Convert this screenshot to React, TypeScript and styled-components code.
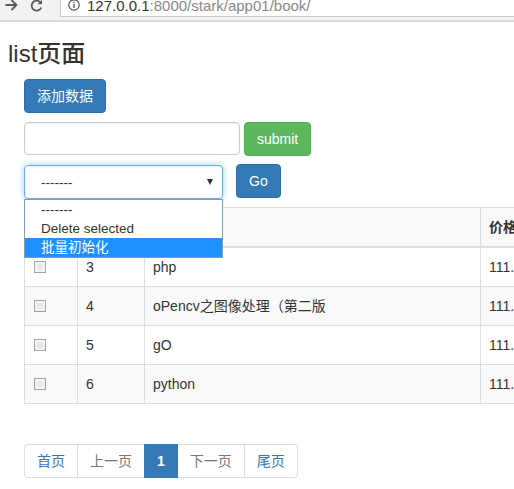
import React from "react";
import styled, { createGlobalStyle } from "styled-components";

const Global = createGlobalStyle`
  html, body { margin: 0; padding: 0; background: #fff; overflow: hidden; }
  body {
    font-family: "Liberation Sans", "Noto Sans CJK SC", Arial, sans-serif;
    font-size: 14px;
    color: #333;
  }
  * { box-sizing: border-box; }
`;

const font = `"Liberation Sans", "Noto Sans CJK SC", Arial, sans-serif`;

const TopBar = styled.div`
  height: 22px;
  display: flex;
  align-items: flex-end;
  overflow: hidden;
  background: #f2f2f2;
  border-bottom: 2px solid #d9d9d9;
  padding-bottom: 3px;
`;

const NavIcon = styled.span<{ $w: number }>`
  width: ${(p) => p.$w}px;
  height: 24px;
  display: flex;
  align-items: center;
  justify-content: center;
  flex: none;
`;

const AddressBox = styled.div`
  flex: 1;
  height: 24px;
  margin-left: 10px;
  background: #fff;
  border: 1px solid #c8c8c8;
  border-right: none;
  border-radius: 2px 0 0 2px;
  display: flex;
  align-items: center;
  padding-left: 7px;
  gap: 7px;
  font-family: ${font};
  font-size: 15px;
  white-space: nowrap;
`;

const Host = styled.span`
  color: #333;
`;
const PathPart = styled.span`
  color: #888;
`;

const Title = styled.h3`
  margin: 19px 0 0 8px;
  font-size: 24px;
  line-height: 26px;
  font-weight: 500;
  color: #333;
`;

const Content = styled.div`
  padding-left: 24px;
  display: flex;
  flex-direction: column;
  align-items: flex-start;
`;

const Btn = styled.button<{ $variant: "primary" | "success"; $h?: number }>`
  font-family: ${font};
  font-size: 14px;
  line-height: 20px;
  height: ${(p) => p.$h ?? 34}px;
  padding: 0 12px;
  border-radius: 4px;
  color: #fff;
  border: 1px solid ${(p) => (p.$variant === "primary" ? "#2e6da4" : "#4cae4c")};
  background: ${(p) => (p.$variant === "primary" ? "#337ab7" : "#5cb85c")};
  cursor: pointer;
  flex: none;
`;

const Row = styled.div<{ $mt: number; $gap: number }>`
  display: flex;
  align-items: flex-start;
  gap: ${(p) => p.$gap}px;
  margin-top: ${(p) => p.$mt}px;
`;

const TextInput = styled.input`
  width: 216px;
  height: 33px;
  border: 1px solid #ccc;
  border-radius: 4px;
  box-shadow: inset 0 1px 1px rgba(0, 0, 0, 0.075);
  padding: 6px 12px;
  font-family: ${font};
  font-size: 14px;
  outline: none;
`;

const SelectWrap = styled.div`
  position: relative;
  width: 199px;
  margin-top: 1px;
`;

const SelectBox = styled.div`
  height: 34px;
  border: 1px solid #66afe9;
  border-radius: 4px;
  box-shadow: inset 0 1px 1px rgba(0, 0, 0, 0.075), 0 0 6px rgba(102, 175, 233, 0.6);
  display: flex;
  align-items: center;
  justify-content: space-between;
  padding: 0 9px 0 16px;
  font-size: 13.5px;
  color: #333;
  background: #fff;
`;

const Caret = styled.span`
  width: 0;
  height: 0;
  border-left: 3.5px solid transparent;
  border-right: 3.5px solid transparent;
  border-top: 6px solid #333;
`;

const Dropdown = styled.div`
  position: absolute;
  top: 34px;
  left: 0;
  width: 199px;
  background: #fff;
  border: 1px solid #7f9db9;
  z-index: 5;
`;

const Option = styled.div<{ $active?: boolean }>`
  height: 19px;
  line-height: 19px;
  padding-left: 16px;
  font-size: 13.5px;
  font-family: ${font};
  color: ${(p) => (p.$active ? "#fff" : "#333")};
  background: ${(p) => (p.$active ? "#1e90ff" : "#fff")};
`;

const Table = styled.table`
  margin-top: 8px;
  width: 620px;
  border-collapse: collapse;
  table-layout: fixed;
  flex: none;
`;

const Th = styled.th`
  border: 1px solid #ddd;
  border-bottom: 2px solid #ddd;
  padding: 9px 8px 8px;
  height: 39px;
  line-height: 20px;
  text-align: left;
  font-weight: 700;
  background: #f9f9f9;
  white-space: nowrap;
`;

const Tr = styled.tr<{ $striped: boolean }>`
  background: ${(p) => (p.$striped ? "#f9f9f9" : "#fff")};
`;

const Td = styled.td`
  border: 1px solid #ddd;
  padding: 9px 8px;
  line-height: 20px;
  white-space: nowrap;
  overflow: hidden;
`;

const Check = styled.span`
  display: block;
  width: 12px;
  height: 12px;
  margin-left: 1px;
  border: 1px solid #a6a6a6;
  background: #e9e9e9;
  box-shadow: inset 0 0 0 2px #f3f3f3;
`;

const Pager = styled.ul`
  display: flex;
  list-style: none;
  margin: 40px 0 0;
  padding: 0;
`;

const PageItem = styled.li<{ $kind: "link" | "disabled" | "active"; $first?: boolean; $last?: boolean }>`
  padding: 6px 12px;
  line-height: 20px;
  font-size: 14px;
  border: 1px solid ${(p) => (p.$kind === "active" ? "#337ab7" : "#ddd")};
  margin-left: ${(p) => (p.$first ? 0 : -1)}px;
  position: relative;
  z-index: ${(p) => (p.$kind === "active" ? 2 : 1)};
  color: ${(p) => (p.$kind === "active" ? "#fff" : p.$kind === "disabled" ? "#777" : "#337ab7")};
  background: ${(p) => (p.$kind === "active" ? "#337ab7" : "#fff")};
  font-weight: ${(p) => (p.$kind === "active" ? 700 : 400)};
  border-radius: ${(p) => (p.$first ? "4px 0 0 4px" : p.$last ? "0 4px 4px 0" : "0")};
`;

const rows = [
  { id: 3, title: "php", price: "111.00" },
  { id: 4, title: "oPencv之图像处理（第二版", price: "111.00" },
  { id: 5, title: "gO", price: "111.00" },
  { id: 6, title: "python", price: "111.00" },
];

export default function App() {
  return (
    <>
      <Global />
      <TopBar>
        <NavIcon $w={22}>
          <svg width="13" height="12" viewBox="0 0 13 12">
            <path d="M0.5 6h11M6.5 1l5 5-5 5" fill="none" stroke="#5a5a5a" strokeWidth="1.8" />
          </svg>
        </NavIcon>
        <NavIcon $w={28}>
          <svg width="13" height="13" viewBox="0 0 13 13">
            <path d="M11 4.2A5 5 0 1 0 11.3 8.5" fill="none" stroke="#5a5a5a" strokeWidth="1.8" />
            <path d="M12 0.8v4.4H7.6z" fill="#5a5a5a" />
          </svg>
        </NavIcon>
        <AddressBox>
          <svg width="12" height="12" viewBox="0 0 12 12">
            <circle cx="6" cy="6" r="5.2" fill="none" stroke="#555" strokeWidth="1.2" />
            <rect x="5.4" y="5" width="1.3" height="4" fill="#555" />
            <rect x="5.4" y="2.8" width="1.3" height="1.3" fill="#555" />
          </svg>
          <span>
            <Host>127.0.0.1</Host>
            <PathPart>:8000/stark/app01/book/</PathPart>
          </span>
        </AddressBox>
      </TopBar>
      <Title>list页面</Title>
      <Content>
        <Row $mt={12} $gap={0}>
          <Btn $variant="primary">添加数据</Btn>
        </Row>
        <Row $mt={9} $gap={4}>
          <TextInput />
          <Btn $variant="success">submit</Btn>
        </Row>
        <Row $mt={8} $gap={13}>
          <SelectWrap>
            <SelectBox>
              <span>-------</span>
              <Caret />
            </SelectBox>
            <Dropdown>
              <Option>-------</Option>
              <Option>Delete selected</Option>
              <Option $active>批量初始化</Option>
            </Dropdown>
          </SelectWrap>
          <Btn $variant="primary">Go</Btn>
        </Row>
        <Table>
          <colgroup>
            <col style={{ width: 53 }} />
            <col style={{ width: 67 }} />
            <col style={{ width: 336 }} />
            <col style={{ width: 164 }} />
          </colgroup>
          <thead>
            <tr>
              <Th />
              <Th />
              <Th />
              <Th>价格</Th>
            </tr>
          </thead>
          <tbody>
            {rows.map((r, i) => (
              <Tr key={r.id} $striped={i % 2 === 1}>
                <Td>
                  <Check />
                </Td>
                <Td>{r.id}</Td>
                <Td>{r.title}</Td>
                <Td>{r.price}</Td>
              </Tr>
            ))}
          </tbody>
        </Table>
        <Pager>
          <PageItem $kind="link" $first>首页</PageItem>
          <PageItem $kind="disabled">上一页</PageItem>
          <PageItem $kind="active">1</PageItem>
          <PageItem $kind="disabled">下一页</PageItem>
          <PageItem $kind="link" $last>尾页</PageItem>
        </Pager>
      </Content>
    </>
  );
}
